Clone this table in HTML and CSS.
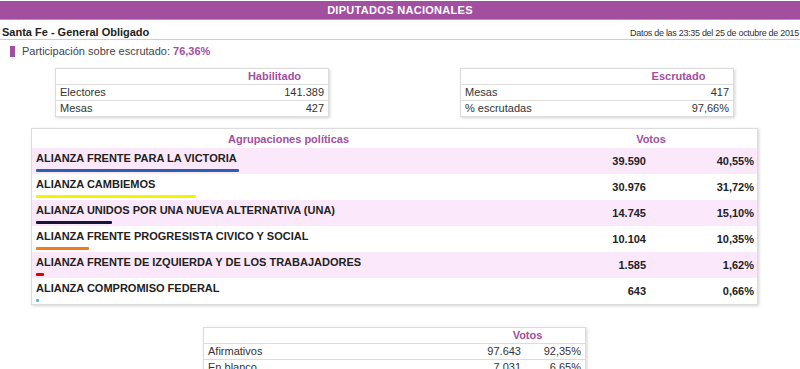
FILE: index.html
```html
<!DOCTYPE html>
<html lang="es">
<head>
<meta charset="utf-8">
<title>Diputados Nacionales</title>
<link rel="stylesheet" href="styles.css">
</head>
<body>
<div class="topbar">DIPUTADOS NACIONALES</div>
<div class="title">
  <span class="place">Santa Fe - General Obligado</span>
  <span class="date">Datos de las 23:35 del 25 de octubre de 2015</span>
</div>
<div class="part"><span class="mark"></span><span>Participación sobre escrutado: <b class="pv">76,36%</b></span></div>

<div class="summary">
  <table class="mini mini-a">
    <tr><th class="c1"></th><th class="c2">Habilitado</th></tr>
    <tr><td>Electores</td><td class="num">141.389</td></tr>
    <tr><td>Mesas</td><td class="num">427</td></tr>
  </table>
  <table class="mini mini-b">
    <tr><th class="c1"></th><th class="c2">Escrutado</th></tr>
    <tr><td>Mesas</td><td class="num">417</td></tr>
    <tr><td>% escrutadas</td><td class="num">97,66%</td></tr>
  </table>
</div>

<table class="parties">
  <tr class="ph"><th class="pname-h">Agrupaciones políticas</th><th colspan="2" class="votos-h">Votos</th></tr>
  <tr class="odd"><td class="pname"><div>ALIANZA FRENTE PARA LA VICTORIA</div><span class="bar" style="width:203px;background:#2b5fb3"></span></td><td class="pv1">39.590</td><td class="pv2">40,55%</td></tr>
  <tr><td class="pname"><div>ALIANZA CAMBIEMOS</div><span class="bar" style="width:160px;background:#f4f400"></span></td><td class="pv1">30.976</td><td class="pv2">31,72%</td></tr>
  <tr class="odd"><td class="pname"><div>ALIANZA UNIDOS POR UNA NUEVA ALTERNATIVA (UNA)</div><span class="bar" style="width:76px;background:#15163a"></span></td><td class="pv1">14.745</td><td class="pv2">15,10%</td></tr>
  <tr><td class="pname"><div>ALIANZA FRENTE PROGRESISTA CIVICO Y SOCIAL</div><span class="bar" style="width:53px;background:#f07a1c"></span></td><td class="pv1">10.104</td><td class="pv2">10,35%</td></tr>
  <tr class="odd"><td class="pname"><div>ALIANZA FRENTE DE IZQUIERDA Y DE LOS TRABAJADORES</div><span class="bar" style="width:8px;background:#e60000"></span></td><td class="pv1">1.585</td><td class="pv2">1,62%</td></tr>
  <tr><td class="pname"><div>ALIANZA COMPROMISO FEDERAL</div><span class="bar" style="width:3px;background:#5fbcbc"></span></td><td class="pv1">643</td><td class="pv2">0,66%</td></tr>
</table>

<table class="mini mini-c">
  <tr><th class="c1"></th><th colspan="2" class="c2">Votos</th></tr>
  <tr><td>Afirmativos</td><td class="num">97.643</td><td class="num">92,35%</td></tr>
  <tr><td>En blanco</td><td class="num">7.031</td><td class="num">6,65%</td></tr>
</table>
</body>
</html>
```
FILE: styles.css
```css
html, body {
  margin: 0;
  padding: 0;
  background: #fff;
  font-family: "Liberation Sans", Arial, sans-serif;
  font-size: 11px;
  color: #333;
}
.topbar {
  margin-top: 1px;
  height: 18px;
  line-height: 18px;
  background: #a24fa0;
  border-bottom: 1px solid #c48ac2;
  color: #fff;
  font-weight: bold;
  text-align: center;
  letter-spacing: 0.3px;
}
.title {
  display: flex;
  justify-content: space-between;
  align-items: baseline;
  height: 19px;
  padding: 0 1px 0 2px;
  border-bottom: 1px solid #cfcfcf;
  line-height: 24px;
}
.place {
  font-weight: bold;
  color: #222;
}
.date {
  font-size: 9px;
  letter-spacing: -0.3px;
  color: #333;
}
.part {
  display: flex;
  align-items: center;
  margin: 5px 0 0 10px;
  height: 12px;
  color: #444;
}
.mark {
  width: 5px;
  height: 11px;
  background: #a24fa0;
  margin-right: 7px;
}
.pv {
  color: #a24fa0;
}
.summary {
  display: flex;
  margin-top: 11px;
}
table {
  border-collapse: collapse;
}
.mini {
  border: 1px solid #dcdcdc;
  box-shadow: 1px 1px 3px rgba(0, 0, 0, 0.18);
  color: #333;
}
.mini th, .mini td {
  height: 15px;
  padding: 0 4px 0 4px;
  border-bottom: 1px solid #dcdcdc;
  line-height: 15px;
  font-weight: normal;
}
.mini tr:last-child td {
  border-bottom: none;
}
.mini th.c2 {
  color: #a24fa0;
  font-weight: bold;
  text-align: center;
}
.mini td.num {
  text-align: right;
}
.mini-a {
  margin-left: 55px;
  width: 274px;
}
.mini-a .c1 { width: 157px; }
.mini-b {
  margin-left: 131px;
  width: 274px;
}
.mini-b .c1 { width: 155px; }
.parties {
  margin: 11px 0 0 31px;
  width: 727px;
  border: 1px solid #dcdcdc;
  box-shadow: 1px 1px 3px rgba(0, 0, 0, 0.18);
}
.parties th {
  height: 19px;
  color: #a24fa0;
  font-weight: bold;
  text-align: center;
  padding: 0;
}
.pname-h { width: 513px; }
.parties td {
  height: 26px;
  padding: 0;
  font-weight: bold;
  color: #222;
  vertical-align: middle;
}
.parties tr.odd td {
  background: #fbe8fa;
}
.pname {
  padding-left: 4px !important;
}
.pname div {
  line-height: 13px;
  margin-top: 1px;
}
.bar {
  display: block;
  height: 3px;
  margin-top: 4px;
  border-radius: 1px;
}
.pv1 {
  width: 101px;
  text-align: right;
  padding-right: 4px !important;
}
.pv2 {
  text-align: right;
  padding-right: 3px !important;
}
.mini-c {
  margin: 22px 0 0 203px;
  width: 383px;
}
.mini-c .c1 { width: 258px; }
```
